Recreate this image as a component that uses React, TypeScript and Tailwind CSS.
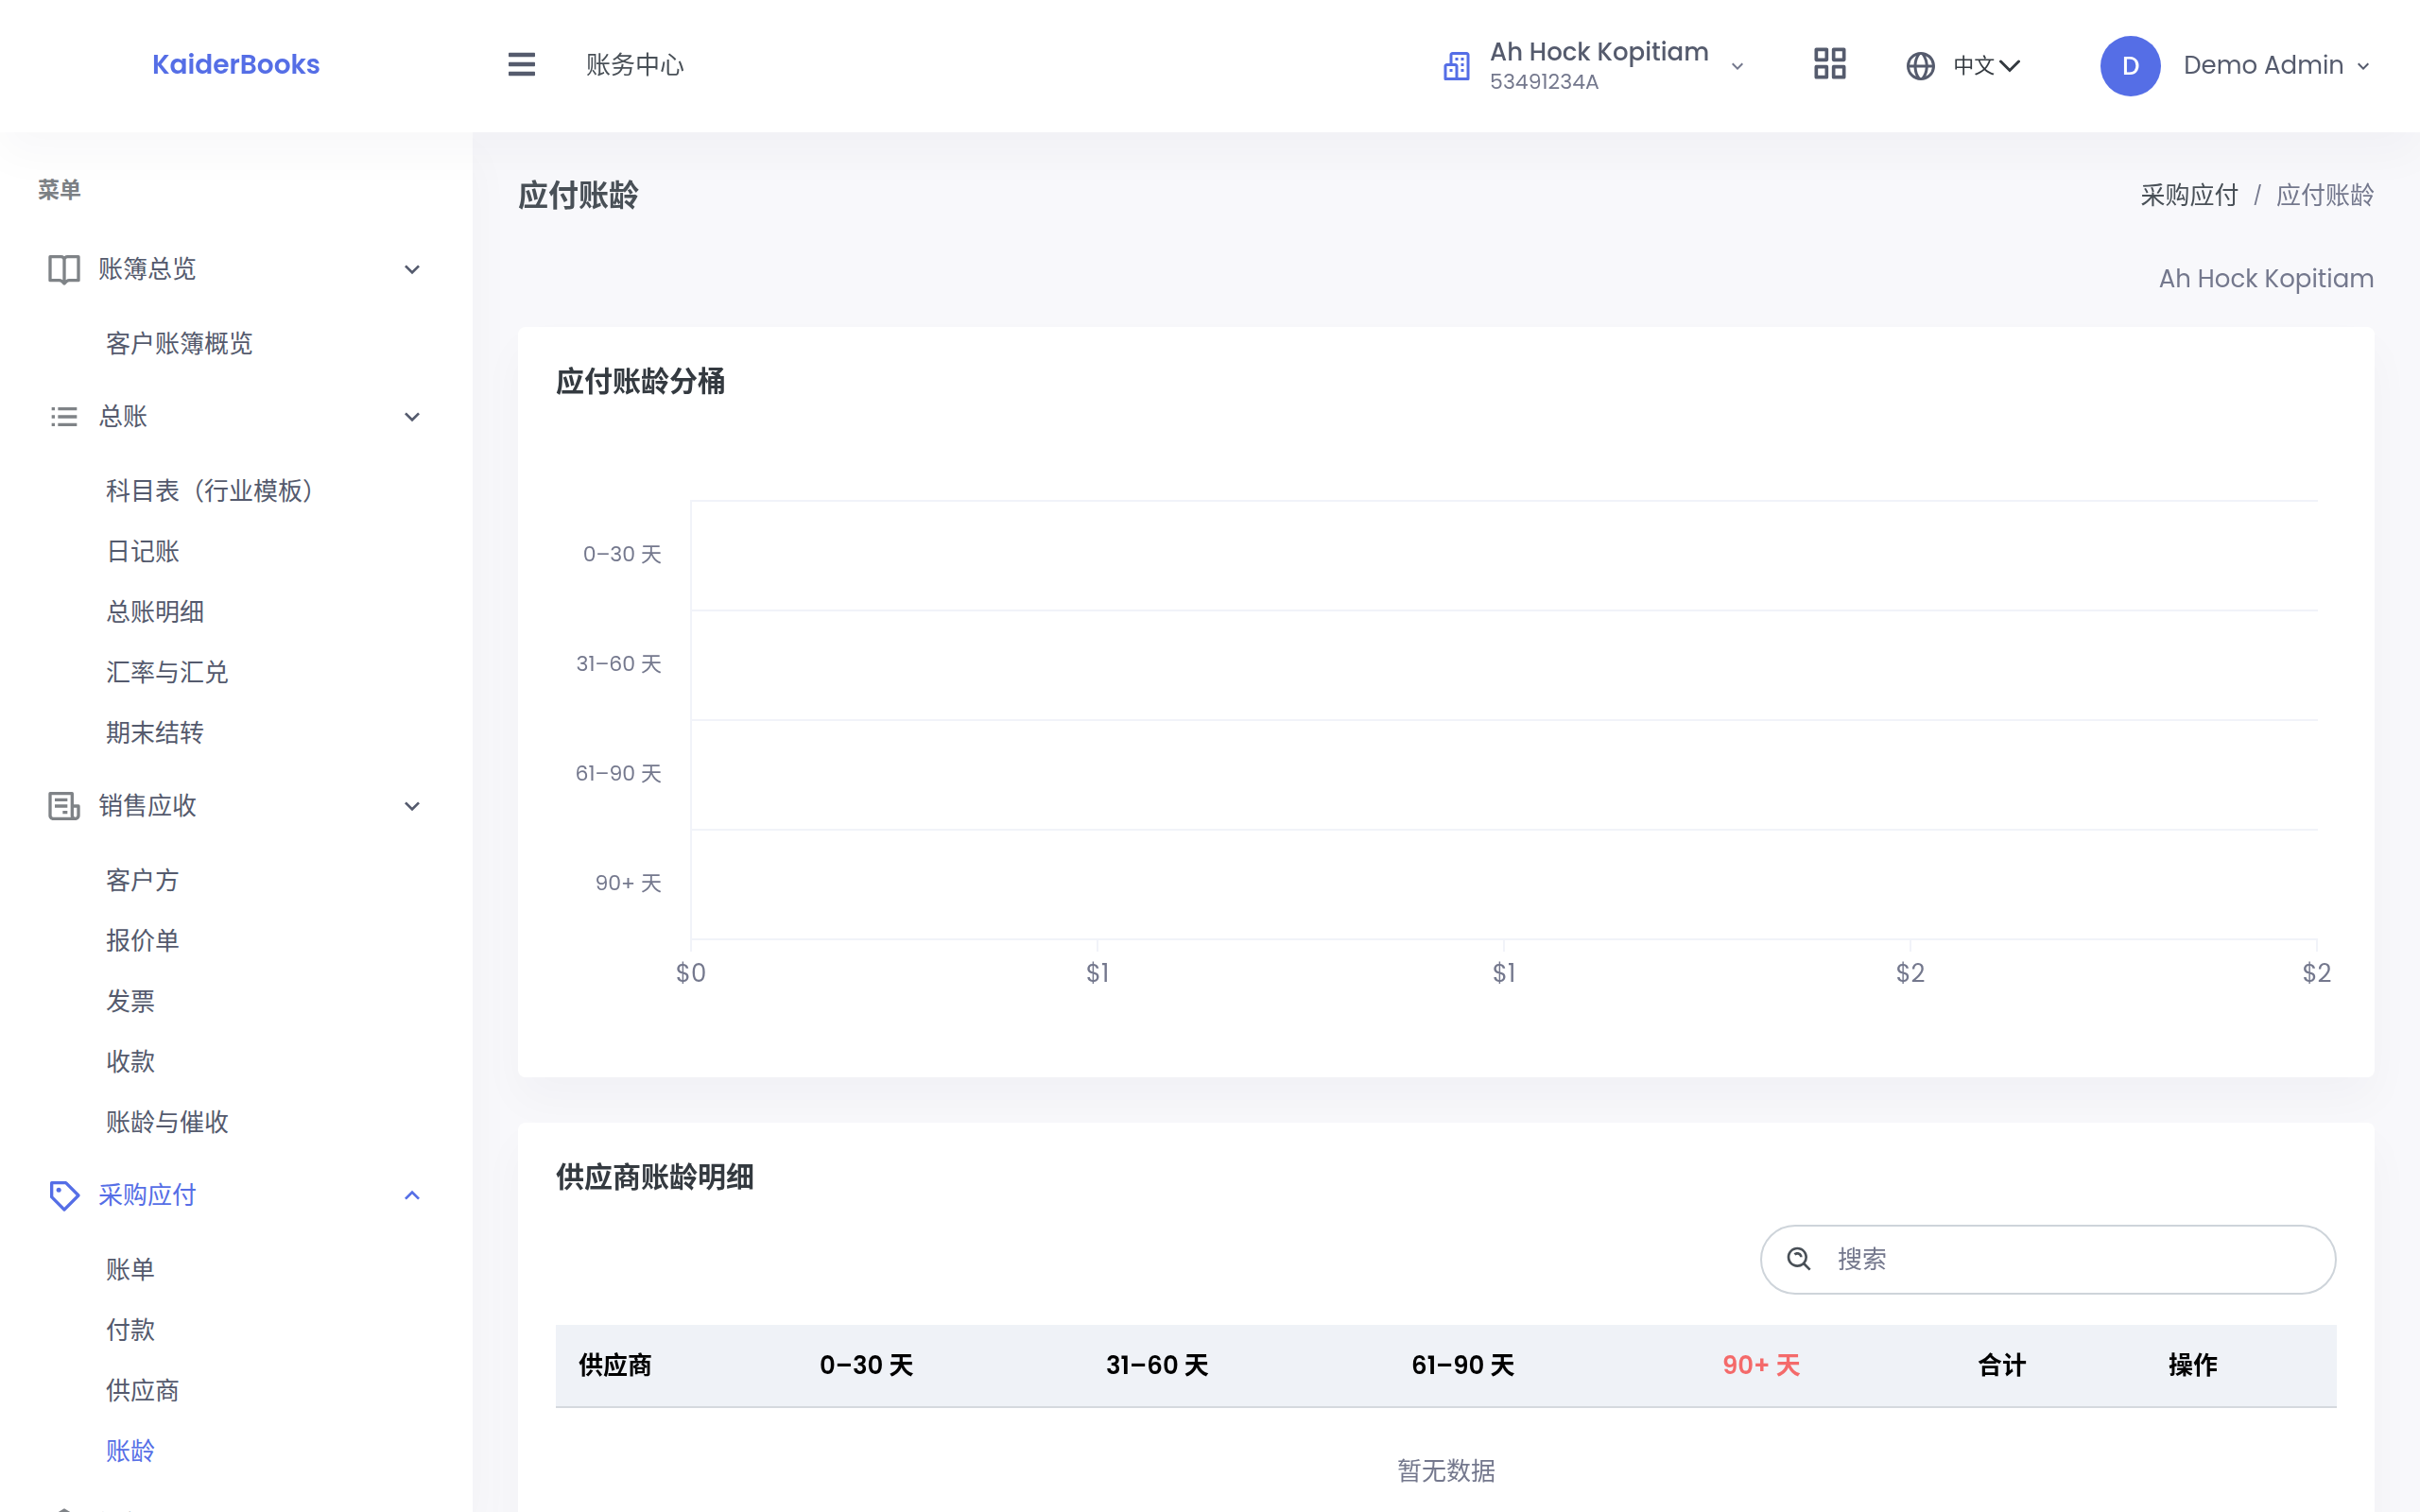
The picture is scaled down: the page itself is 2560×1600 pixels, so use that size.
import { useState } from "react";
import type { ReactNode } from "react";
import {
  BiBookOpen,
  BiBuildings,
  BiGlobe,
  BiGridAlt,
  BiListUl,
  BiPurchaseTag,
  BiReceipt,
  BiSearchAlt,
  BiSolidBank,
} from "react-icons/bi";
import { FaBars } from "react-icons/fa";
import { MdKeyboardArrowDown, MdKeyboardArrowUp } from "react-icons/md";

type Group = { label: string; icon: ReactNode; items: string[]; active?: boolean };

const groups: Group[] = [
  { label: "账簿总览", icon: <BiBookOpen size={40} />, items: ["客户账簿概览"] },
  {
    label: "总账",
    icon: <BiListUl size={40} />,
    items: ["科目表（行业模板）", "日记账", "总账明细", "汇率与汇兑", "期末结转"],
  },
  {
    label: "销售应收",
    icon: <BiReceipt size={40} />,
    items: ["客户方", "报价单", "发票", "收款", "账龄与催收"],
  },
  {
    label: "采购应付",
    icon: <BiPurchaseTag size={40} />,
    items: ["账单", "付款", "供应商", "账龄"],
    active: true,
  },
  { label: "银行", icon: <BiSolidBank size={40} />, items: [] },
];

const buckets = ["0–30 天", "31–60 天", "61–90 天", "90+ 天"];
const ticks = ["$0", "$1", "$1", "$2", "$2"];

function Header() {
  return (
    <header className="relative z-20 flex h-[140px] shrink-0 items-center bg-white pr-12 text-[#555b6d] shadow-[0_24px_48px_rgba(18,38,63,0.03)]">
      <a
        href="#home"
        className="w-[500px] shrink-0 pb-0.5 text-center text-[28px] font-semibold text-[#556ee6]"
      >
        KaiderBooks
      </a>
      <button type="button" aria-label="切换菜单" className="ml-[38px] pb-1">
        <FaBars size={32} className="w-7" />
      </button>
      <span className="ml-[54px] pb-0.5 text-[26px] text-[#495057]">账务中心</span>

      <button type="button" className="ml-auto flex items-center text-left">
        <BiBuildings size={36} className="text-[#556ee6]" />
        <span className="ml-[17px] flex flex-col">
          <span className="text-[26px] leading-[34px] font-medium">Ah Hock Kopitiam</span>
          <span className="text-[22px] leading-[30px] text-[#74788d]">53491234A</span>
        </span>
        <MdKeyboardArrowDown size={24} className="ml-[18px] text-[#74788d]" />
      </button>
      <button type="button" aria-label="应用" className="ml-[64px] pb-1.5">
        <BiGridAlt size={44} />
      </button>
      <div className="relative ml-[56px] flex items-center">
        <BiGlobe size={36} />
        <select
          aria-label="语言"
          defaultValue="zh"
          className="ml-4 w-[72px] appearance-none bg-transparent pb-0.5 text-[22px] text-[#343a40]"
        >
          <option value="zh">中文</option>
          <option value="en">English</option>
        </select>
        <svg
          viewBox="0 0 24 14"
          className="pointer-events-none absolute right-0 h-[14px] w-6"
          fill="none"
          stroke="#343a40"
          strokeWidth="3"
          strokeLinecap="round"
        >
          <path d="M2.5 2l9.5 9.5L21.5 2" />
        </svg>
      </div>
      <button type="button" className="ml-[84px] flex items-center">
        <span className="flex size-16 items-center justify-center rounded-full bg-[#556ee6] text-[26px] font-medium text-white">
          D
        </span>
        <span className="ml-6 pb-0.5 text-[26px]">Demo Admin</span>
        <MdKeyboardArrowDown size={24} className="ml-2" />
      </button>
    </header>
  );
}

function Sidebar() {
  return (
    <nav
      aria-label="菜单"
      className="w-[500px] shrink-0 overflow-y-auto bg-white text-[26px] text-[#545a6d] shadow-[0_24px_48px_rgba(18,38,63,0.03)] [scrollbar-width:none]"
    >
      <h2 className="px-10 pt-[41px] pb-5 text-[23px] leading-10 font-bold text-[#7b8084]">菜单</h2>
      <ul>
        {groups.map((g) => (
          <li key={g.label}>
            <button
              type="button"
              className={
                g.active
                  ? "flex h-[88px] w-full items-center pr-12 pl-12 text-[#556ee6]"
                  : "flex h-[88px] w-full items-center pr-12 pl-12"
              }
            >
              <span className={g.active ? "" : "text-[#7f8387]"}>{g.icon}</span>
              <span className="ml-4">{g.label}</span>
              <span className="ml-auto">
                {g.active ? <MdKeyboardArrowUp size={32} /> : <MdKeyboardArrowDown size={32} />}
              </span>
            </button>
            <ul className="pt-[3px] pb-px">
              {g.items.map((item) => (
                <li key={item}>
                  <a
                    href="#page"
                    className={
                      g.active && item === "账龄"
                        ? "flex h-16 items-center pl-28 text-[#556ee6]"
                        : "flex h-16 items-center pl-28"
                    }
                  >
                    {item}
                  </a>
                </li>
              ))}
            </ul>
          </li>
        ))}
      </ul>
    </nav>
  );
}

function Card({ title, children }: { title: string; children: ReactNode }) {
  return (
    <section className="mb-12 rounded-lg bg-white p-10 shadow-[0_24px_48px_rgba(18,38,63,0.03)]">
      <h2 className="text-[30px] leading-9 font-bold text-[#343a40]">{title}</h2>
      {children}
    </section>
  );
}

function AgingChart() {
  return (
    <div className="mt-[107px] mr-5 mb-[52px] text-[#74788d]">
      <div className="flex">
        <div className="w-28 text-right text-[22px]">
          {buckets.map((b) => (
            <div key={b} className="flex h-[116px] items-center justify-end pb-0.5">
              {b}
            </div>
          ))}
        </div>
        <div className="ml-[30px] flex-1 border-t-2 border-l-2 border-[#f1f3f9]">
          {buckets.map((b) => (
            <div key={b} className="h-[116px] border-b-2 border-[#f1f3f9]" />
          ))}
        </div>
      </div>
      <div className="ml-[142px] flex justify-between">
        {ticks.map((t, i) => (
          <div key={i} className="flex w-0.5 flex-col items-center">
            <div className="h-3 w-0.5 bg-[#f1f3f9]" />
            <div className="mt-[5px] text-[26px] leading-9">{t}</div>
          </div>
        ))}
      </div>
    </div>
  );
}

function AgingTable() {
  const [query, setQuery] = useState("");
  return (
    <>
      <label className="mt-8 ml-auto flex h-[74px] w-[610px] items-center rounded-full border-2 border-[#ced4da] pl-6 text-[#495057]">
        <BiSearchAlt size={32} />
        <input
          type="text"
          aria-label="搜索"
          placeholder="搜索"
          value={query}
          onChange={(e) => setQuery(e.target.value)}
          className="ml-6 min-w-0 flex-1 bg-transparent text-[26px] outline-none placeholder:text-[#74788d]"
        />
      </label>
      <table className="mt-8 w-full table-fixed text-left text-[26px] leading-[38px]">
        <colgroup>
          <col className="w-[255px]" />
          <col className="w-[303px]" />
          <col className="w-[323px]" />
          <col className="w-[329px]" />
          <col className="w-[270px]" />
          <col className="w-[202px]" />
          <col className="w-[202px]" />
        </colgroup>
        <thead>
          <tr className="border-b-2 border-[#d5d9de] bg-[#eff2f7] text-black">
            <th className="px-6 py-6 font-semibold">供应商</th>
            {buckets.map((b) => (
              <th
                key={b}
                className={
                  b === "90+ 天"
                    ? "px-6 py-6 font-semibold text-[#f46a6a]"
                    : "px-6 py-6 font-semibold"
                }
              >
                {b}
              </th>
            ))}
            <th className="px-6 py-6 font-semibold">合计</th>
            <th className="px-6 py-6 font-semibold">操作</th>
          </tr>
        </thead>
        <tbody>
          <tr>
            <td colSpan={7} className="px-6 py-12 text-center text-[#74788d]">
              暂无数据
            </td>
          </tr>
        </tbody>
      </table>
    </>
  );
}

export default function App() {
  return (
    <div
      lang="zh-CN"
      className="flex h-screen flex-col bg-[#f8f8fb] font-['Poppins','Inter','Noto_Sans_CJK_SC',sans-serif]"
    >
      <Header />
      <div className="flex min-h-0 flex-1">
        <Sidebar />
        <main className="min-w-0 flex-1 overflow-y-auto px-12 [scrollbar-width:none]">
          <div className="flex h-[134px] items-center justify-between">
            <h1 className="text-[32px] font-bold text-[#495057]">应付账龄</h1>
            <nav aria-label="面包屑" className="flex items-center gap-[15px] text-[26px] text-[#74788d]">
              <a href="#payables" className="text-[#495057]">
                采购应付
              </a>
              <span className="text-[20px]">/</span>
              <span>应付账龄</span>
            </nav>
          </div>
          <p className="mb-[31px] pt-px text-right text-[26px] leading-10 text-[#74788d]">Ah Hock Kopitiam</p>
          <Card title="应付账龄分桶">
            <AgingChart />
          </Card>
          <Card title="供应商账龄明细">
            <AgingTable />
          </Card>
        </main>
      </div>
    </div>
  );
}
